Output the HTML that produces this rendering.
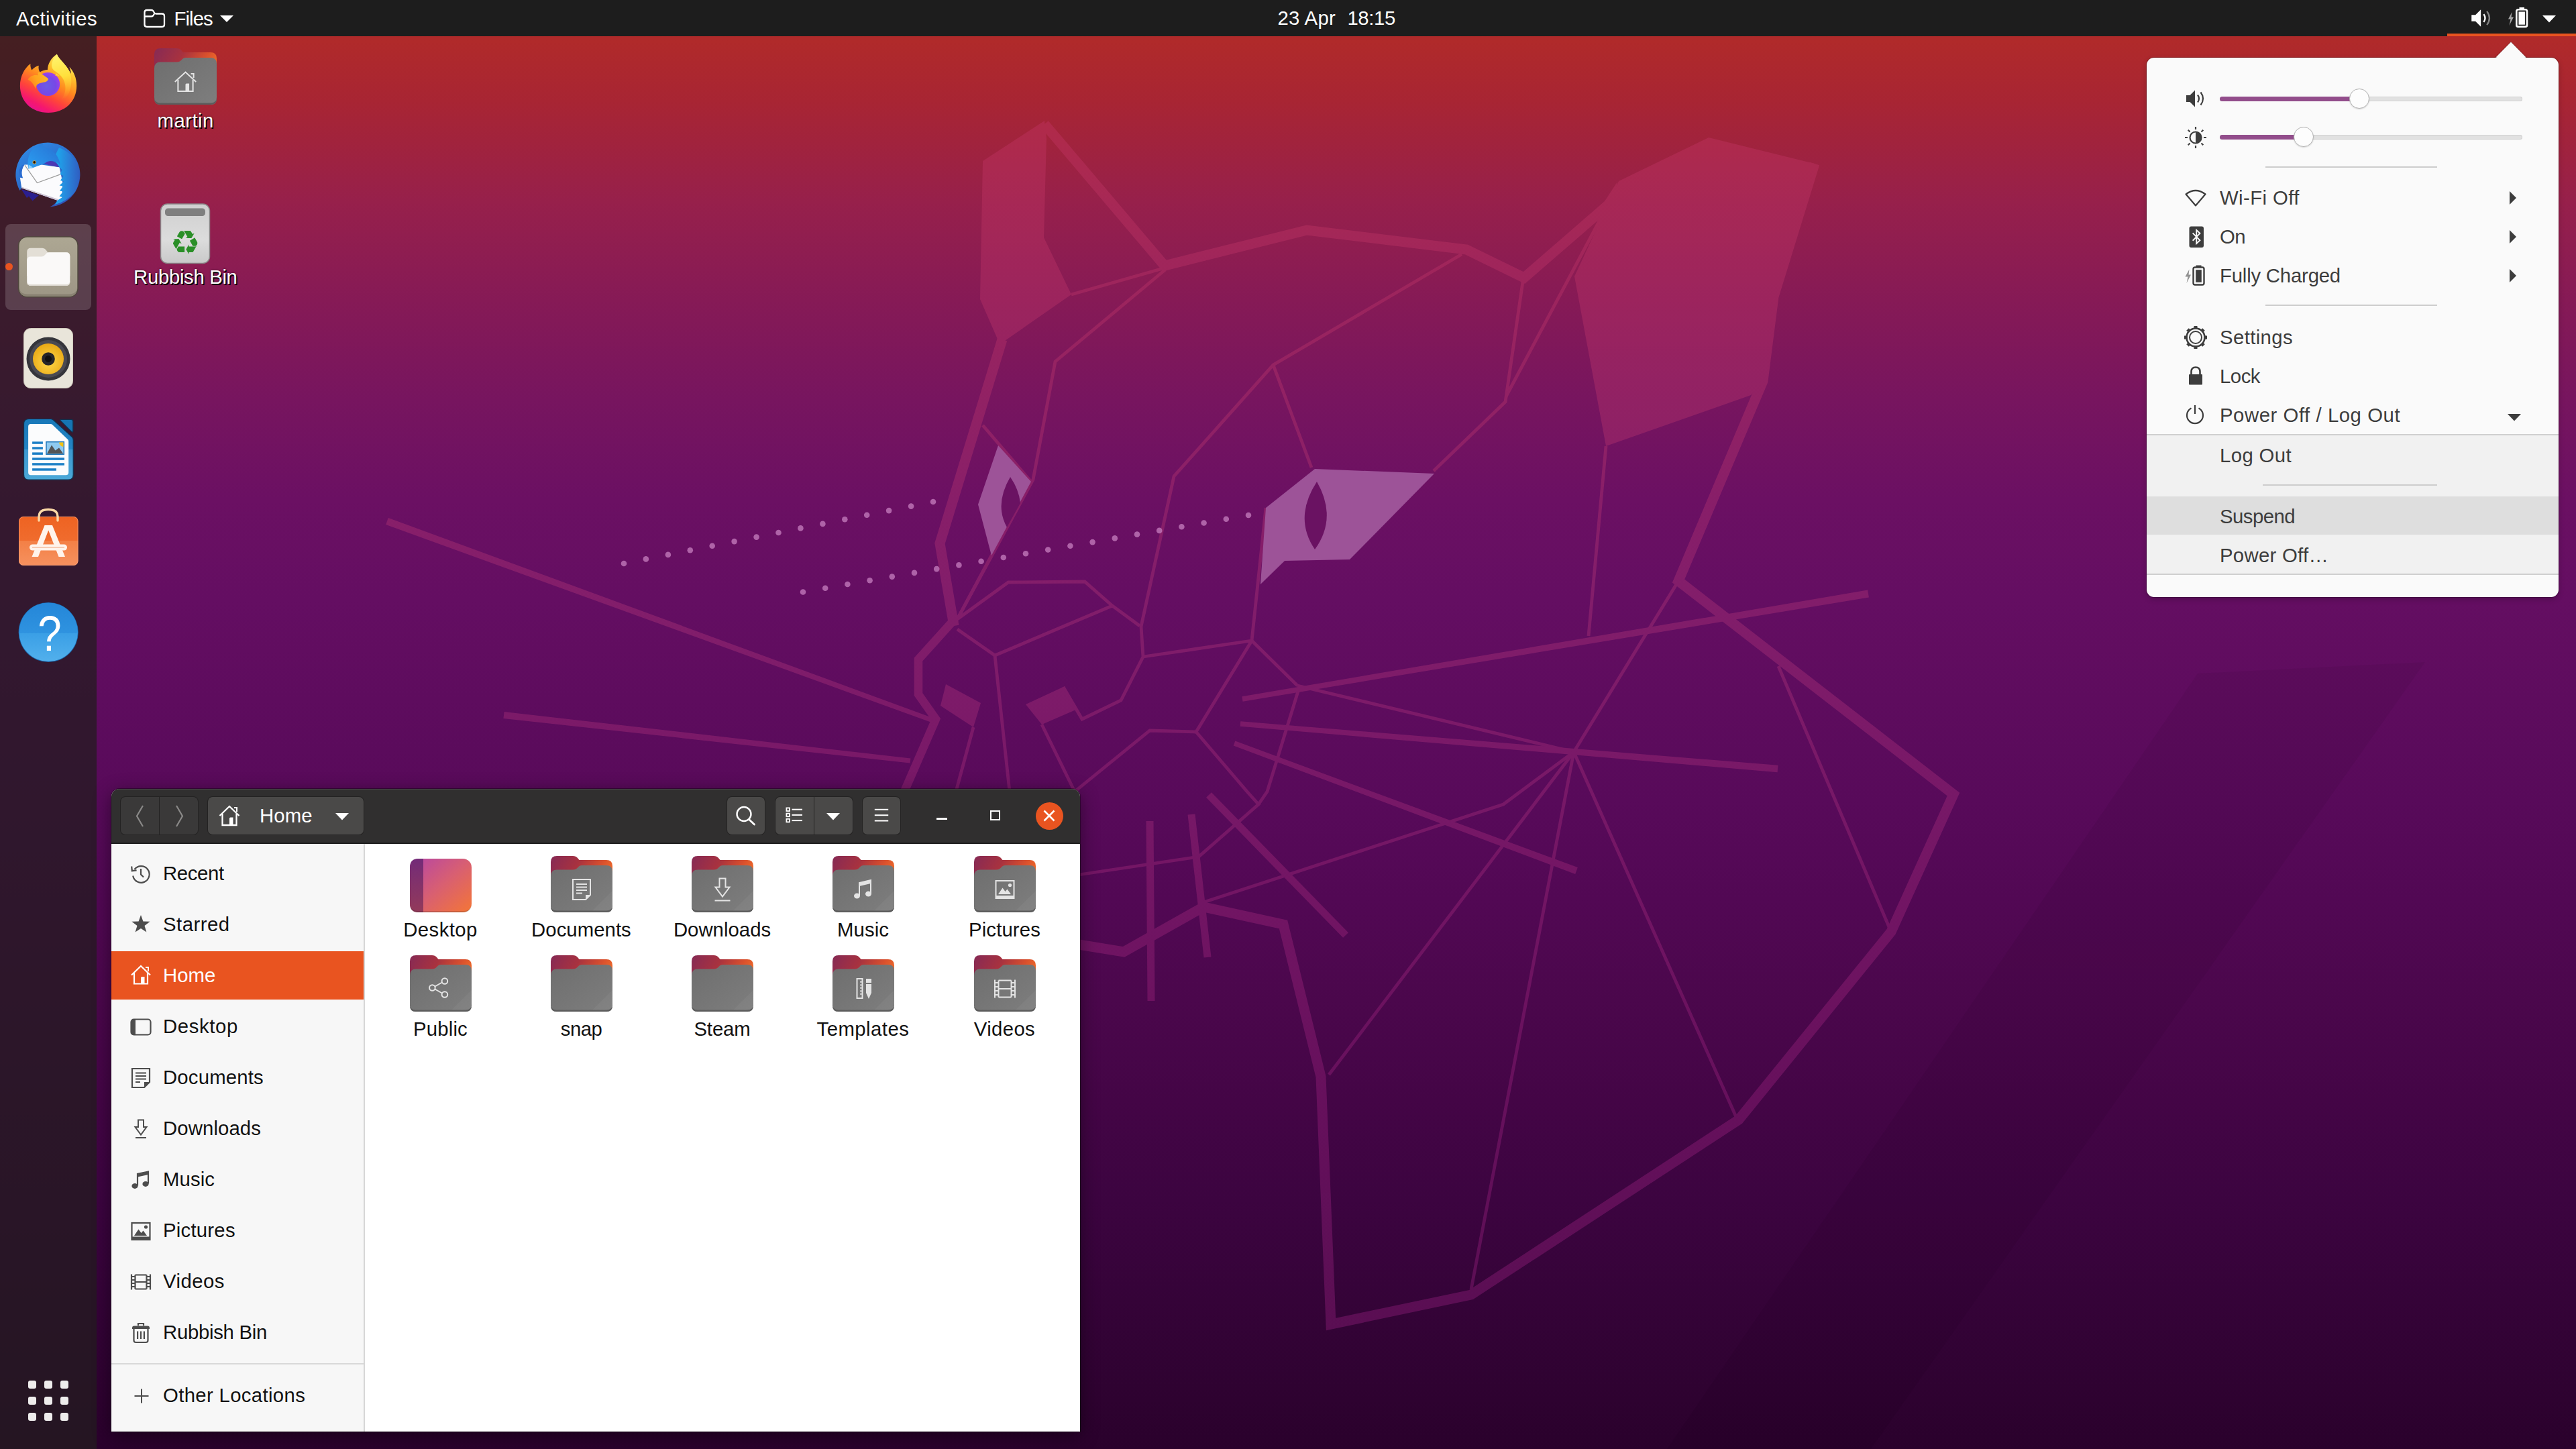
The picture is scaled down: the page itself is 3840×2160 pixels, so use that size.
<!DOCTYPE html>
<html lang="en">
<head>
<meta charset="utf-8">
<title>Ubuntu Desktop</title>
<style>
html,body{margin:0;padding:0;}
body{width:3840px;height:2160px;overflow:hidden;position:relative;
 font-family:"Liberation Sans","DejaVu Sans",sans-serif;font-size:29px;color:#fff;
 background:linear-gradient(180deg,#b22b29 0px,#b02a2a 60px,#a82533 150px,#97204b 300px,#861a56 447px,#77155f 596px,#6b1063 745px,#640e62 894px,#5e0c5e 1043px,#580a5a 1192px,#520854 1341px,#4b074c 1490px,#440546 1640px,#3c0440 1789px,#350338 1938px,#2e0230 2087px,#2a012c 2160px);}
.abs{position:absolute;}
#topbar{position:absolute;left:0;top:0;width:3840px;height:53.5px;background:#1d1d1d;}
#topbar .t{position:absolute;top:0;height:54px;line-height:54px;font-size:29.5px;color:#fff;white-space:nowrap;}
#dock{position:absolute;left:0;top:53.5px;width:144px;height:2106.5px;background:rgba(36,28,32,0.76);}
</style>
</head>
<body>
<svg id="wall" width="3840" height="2160" viewBox="0 0 3840 2160" style="position:absolute;left:0;top:0">
<polygon points="3276,1004 3615,987 2789,2160 2485,2160" fill="#000" opacity="0.05"/>
<defs><linearGradient id="lg" gradientUnits="userSpaceOnUse" x1="0" y1="180" x2="0" y2="1980"><stop offset="0" stop-color="#c0335f"/><stop offset="0.43" stop-color="#a63077"/><stop offset="0.75" stop-color="#932078"/><stop offset="1" stop-color="#8a1c76"/></linearGradient></defs>
<g opacity="0.45">
<polygon points="1465,240 1557,180 1560,206 1556,354 1597,439 1495,510 1489,510 1461,446" fill="url(#lg)"/>
<polygon points="2392,300 2411,271 2404,306" fill="url(#lg)"/>
<polygon points="2547,205 2705,244 2644,442 2628,568 2610,589 2394,665 2347,412 2396,307 2413,270" fill="url(#lg)"/>
<g fill="none" stroke="url(#lg)" stroke-linejoin="miter" stroke-linecap="butt">
<g stroke-width="15">
<polyline points="1557,185 1736,396 1948,343 2186,372 2272,414 2400,303"/>
<polyline points="2705,244 2644,442 2628,568 2502,866 2912,1184 2819,1389 2592,1669 2193,1930 1984,1974 1969,1605 1913,1378 1794,1352 1675,1419 1608,1408"/>
</g><g stroke-width="15">
<polyline points="1494,506 1401,810 1422,933"/>
</g><g stroke-width="11">
<polyline stroke-width="12.5" points="1424,922 1369,983 1369,1035 1395,1072 1348,1180"/>
<polyline points="1714,1224 1716,1492"/>
<polyline points="1776,1214 1800,1427"/>
<polyline points="1802,1185 2006,1394"/>
<polygon points="1400.2,1073.7 578.8,772.1 575.2,781.9 1397.8,1080.3" fill="url(#lg)" stroke="none"/>
<polygon points="1357.4,1130.5 751.6,1061.0 750.4,1071.0 1356.6,1137.5" fill="url(#lg)" stroke="none"/>
<polygon points="1852.6,1045.7 2785.9,890.4 2784.1,879.6 1851.4,1038.3" fill="url(#lg)" stroke="none"/>
<polygon points="1848.7,1082.7 2649.6,1151.2 2650.4,1140.8 1849.3,1075.3" fill="url(#lg)" stroke="none"/>
<polygon points="1838.7,1111.5 2348.2,1302.9 2351.8,1293.1 1841.3,1104.5" fill="url(#lg)" stroke="none"/>
</g><g stroke-width="4.8">
<polyline points="1597,439 1734,400"/>
<polyline points="1737,402 1573,539 1540,715 1427,923"/>
<polyline points="2179,379 1898,544 1750,710 1701,934 1704,979 1671,1044 1613,1072 1585,1024"/>
<polyline points="1898,544 1955,697"/>
<polyline points="2270,420 2244,599 2137,702"/>
<polyline points="2396,307 2245,591"/>
<polyline points="1465,634 1537,718"/>
<polyline points="1537,718 1427,923 1503,868 1617,867 1658,903 1699,933"/>
<polyline points="1427,938 1483,977 1658,903"/>
<polyline points="1483,977 1505,1180"/>
<polyline points="1553,1080 1602,1180"/>
<polyline points="1451,1084 1425,1180"/>
<polyline points="1704,979 1866,955 1887,757"/>
<polyline points="1866,955 1934,1022"/>
<polyline points="1866,955 1783,1091 1714,1089 1602,1180"/>
<polyline points="1783,1091 1859,1180 1876,1199 1787,1277 1608,1304"/>
<polyline points="1937,1024 1889,1180 1876,1199"/>
<polyline points="2394,665 2368,948"/>
<polyline points="2502,866 2346,1121"/>
<polyline points="2346,1121 1981,1602"/>
<polyline points="2346,1121 2193,1922"/>
<polyline points="2346,1121 2588,1665"/>
<polyline points="2346,1121 2241,1199 1794,1345"/>
<polyline points="2651,993 2819,1389"/>
<polyline points="1934,1022 2346,1121"/>
</g></g>
<polygon points="1410,1020 1462,1048 1451,1084 1402,1052" fill="url(#lg)"/>
<polygon points="1529,1050 1585,1024 1606,1057 1553,1080" fill="url(#lg)"/>
</g>
<polygon points="1488,664 1537,718 1478,828 1458,752" fill="#9d5398"/>
<polygon points="1960,699 2138,706 2012,834 1915,836 1879,871 1887,757" fill="#9d5398"/>
<path d="M1506,711 Q1482,752 1501,786 L1521,750 Q1519,730 1506,711Z" fill="#6a1262"/>
<path d="M1963,718 Q1928,772 1960,819 Q1994,772 1963,718Z" fill="#6a1262"/>
<g fill="#c77fc0" opacity="0.75"><circle cx="930.0" cy="840.0" r="4.3"/><circle cx="962.9" cy="833.4" r="4.3"/><circle cx="995.9" cy="826.9" r="4.3"/><circle cx="1028.8" cy="820.3" r="4.3"/><circle cx="1061.7" cy="813.7" r="4.3"/><circle cx="1094.6" cy="807.1" r="4.3"/><circle cx="1127.6" cy="800.6" r="4.3"/><circle cx="1160.5" cy="794.0" r="4.3"/><circle cx="1193.4" cy="787.4" r="4.3"/><circle cx="1226.4" cy="780.9" r="4.3"/><circle cx="1259.3" cy="774.3" r="4.3"/><circle cx="1292.2" cy="767.7" r="4.3"/><circle cx="1325.1" cy="761.1" r="4.3"/><circle cx="1358.1" cy="754.6" r="4.3"/><circle cx="1391.0" cy="748.0" r="4.3"/><circle cx="1197.0" cy="882.5" r="4.3"/><circle cx="1230.2" cy="876.8" r="4.3"/><circle cx="1263.4" cy="871.0" r="4.3"/><circle cx="1296.6" cy="865.3" r="4.3"/><circle cx="1329.8" cy="859.6" r="4.3"/><circle cx="1363.0" cy="853.9" r="4.3"/><circle cx="1396.2" cy="848.1" r="4.3"/><circle cx="1429.4" cy="842.4" r="4.3"/><circle cx="1462.6" cy="836.7" r="4.3"/><circle cx="1495.8" cy="831.0" r="4.3"/><circle cx="1529.0" cy="825.2" r="4.3"/><circle cx="1562.2" cy="819.5" r="4.3"/><circle cx="1595.4" cy="813.8" r="4.3"/><circle cx="1628.6" cy="808.1" r="4.3"/><circle cx="1661.8" cy="802.4" r="4.3"/><circle cx="1695.0" cy="796.6" r="4.3"/><circle cx="1728.2" cy="790.9" r="4.3"/><circle cx="1761.4" cy="785.2" r="4.3"/><circle cx="1794.6" cy="779.5" r="4.3"/><circle cx="1827.8" cy="773.7" r="4.3"/><circle cx="1861.0" cy="768.0" r="4.3"/></g>
</svg>
<div id="topbar"></div>
<div class="abs" style="left:24.1px;top:12.7px;font-size:29.33px;line-height:1;white-space:nowrap;letter-spacing:0.54px;color:#fff;">Activities</div>
<svg class="abs" style="left:212px;top:11px" width="38" height="32" viewBox="0 0 38 32"><path d="M3.500 7.500 Q3.500 4 7 4 L13.500 4 Q15.500 4 16.500 5.500 L18 8 Q18.800 9.500 20.500 9.500 L29.500 9.500 Q33 9.500 33 13 L33 25.500 Q33 29 29.500 29 L7 29 Q3.500 29 3.500 25.500 Z M3.500 13.500 L13.500 13.500 Q15.500 13.500 16.500 12 L18 9.500" fill="none" stroke="#fff" stroke-width="2.300" stroke-linejoin="round"/></svg>
<div class="abs" style="left:259.6px;top:12.7px;font-size:29.33px;line-height:1;white-space:nowrap;letter-spacing:-0.95px;color:#fff;">Files</div>
<svg class="abs" style="left:328px;top:23px" width="20" height="10" viewBox="0 0 20 10"><path d="M0 0 L20 0 L10 10Z" fill="#fff"/></svg>
<div class="abs" style="left:1904.4px;top:12.2px;font-size:29.33px;line-height:1;white-space:nowrap;letter-spacing:0.34px;color:#fff;">23 Apr</div>
<div class="abs" style="left:2008.4px;top:12.2px;font-size:29.33px;line-height:1;white-space:nowrap;letter-spacing:-0.36px;color:#fff;">18:15</div>
<div class="abs" style="left:3648px;top:49.500px;width:192px;height:4px;background:#e95420"></div>
<div id="dock"></div>
<!-- Firefox -->
<svg class="abs" style="left:16px;top:66px" width="112" height="112" viewBox="0 0 112 112">
 <defs>
  <linearGradient id="ffA" gradientUnits="userSpaceOnUse" x1="84" y1="22" x2="40" y2="102"><stop offset="0" stop-color="#fff36a"/><stop offset="0.22" stop-color="#ffc32e"/><stop offset="0.45" stop-color="#ff8a1f"/><stop offset="0.68" stop-color="#ff4639"/><stop offset="0.88" stop-color="#f5176f"/><stop offset="1" stop-color="#e8118f"/></linearGradient>
  <radialGradient id="ffB" gradientUnits="userSpaceOnUse" cx="54" cy="62" r="24"><stop offset="0" stop-color="#6b5ce6"/><stop offset="0.55" stop-color="#7748e6"/><stop offset="1" stop-color="#b53cf0"/></radialGradient>
  <linearGradient id="ffC" gradientUnits="userSpaceOnUse" x1="60" y1="44" x2="26" y2="62"><stop offset="0" stop-color="#ffc12a"/><stop offset="0.6" stop-color="#ffa51f"/><stop offset="1" stop-color="#ff7a1c"/></linearGradient>
  <linearGradient id="ffD" gradientUnits="userSpaceOnUse" x1="70" y1="16" x2="86" y2="80"><stop offset="0" stop-color="#fff46e"/><stop offset="0.5" stop-color="#ffe03c"/><stop offset="1" stop-color="#ffb52a" stop-opacity="0"/></linearGradient>
 </defs>
 <path d="M68.800 14.700 C72 22 79 27 85 36 L90 44 C89.500 40 88.500 36.500 87.300 33.600 C94 41 98.200 50 98.200 62 C98.200 85 81 102 56 102 C31 102 13.900 85 13.900 62 C13.900 48 20 36 29.400 29 C29 33 30 36 31.400 38.600 C34 35 38 33 41.700 31.700 C41 36 42 39 43.400 41.600 C47 39 51 38 54.900 37.900 C55 30 60 20 68.800 14.700Z" fill="url(#ffA)"/>
 <path d="M68.800 14.700 C72 22 79 27 85 36 C92 47 92 62 86 74 C82 82 76 86 70 88 C80 80 84 68 80 56 C77 47 70 43 66 40 C60 36 58 28 68.800 14.700Z" fill="url(#ffD)"/>
 <circle cx="55.600" cy="59.500" r="17.600" fill="url(#ffB)"/>
 <path d="M25.500 52.500 C29 47 35 45 41 46.500 C40 43 40.500 41 43.400 41.600 C46 45 51 47 56 51.400 C55.500 54 54 55.500 51.500 56.200 C47.500 57 43.500 57.500 40.200 59.500 C38 61.500 37.200 63.500 37.500 66.500 C35 62 33 58 30 55.500 C28.500 54.500 27 53.500 25.500 52.500Z" fill="url(#ffC)"/>
 <path d="M65.700 46.800 C68.500 46 71 46.500 72.600 47.500 C71 45.500 69 44 66.500 43 C68 44.500 67.500 46 65.700 46.800Z" fill="#ffd43a"/>
</svg>
<!-- Thunderbird -->
<svg class="abs" style="left:16px;top:206px" width="112" height="112" viewBox="0 0 112 112">
 <defs>
  <linearGradient id="tbA" gradientUnits="userSpaceOnUse" x1="30" y1="12" x2="86" y2="100"><stop offset="0" stop-color="#2f86e2"/><stop offset="0.5" stop-color="#2a68c8"/><stop offset="1" stop-color="#3450b4"/></linearGradient>
  <linearGradient id="tbB" gradientUnits="userSpaceOnUse" x1="72" y1="60" x2="104" y2="60"><stop offset="0" stop-color="#1f9fe8"/><stop offset="0.45" stop-color="#2a80d8"/><stop offset="1" stop-color="#2f5cc0"/></linearGradient>
  <linearGradient id="tbC" gradientUnits="userSpaceOnUse" x1="28" y1="44" x2="60" y2="10"><stop offset="0" stop-color="#2a9cf0"/><stop offset="1" stop-color="#2878d8"/></linearGradient>
 </defs>
 <path d="M58 102.500 A48 48 0 1 0 13.500 78 L16.200 74.200 L69.600 92.700 Q66 99 58 102.500Z" fill="url(#tbA)"/>
 <path d="M15.500 75.700 L42 85 L32.500 93.500 L27 86.500 L24 89Z" fill="#2b1f8f"/>
 <path d="M20.500 39.500 L45.600 39.400 L72.600 43.300 L77.300 65.700 L76.500 91.200 L69.600 92.700 L16.200 74.200 L13.900 58.700 L17.800 43.300Z" fill="#fbfbfd"/>
 <path d="M16.200 74.200 L69.600 92.700 L71 91 L16 72.500Z" fill="#cfc6d6"/>
 <path d="M20.900 40.200 L39.400 66.500 L73.400 54.100" fill="none" stroke="#9c9c9c" stroke-width="1.300"/>
 <path d="M20.500 39.500 C16 46 15.500 53 18.200 59.500 L13.900 58.700 L12 48 L17 40Z" fill="#2a6cd0"/>
 <path d="M50 37.500 C58 31 68 34 72.600 43.300 L58 40.500Z" fill="#4c38b4"/>
 <path d="M72.600 43.300 L76.500 47 L73.500 54 L78.500 56 L74 63 L79 64.500 L72.500 70.500 L78 71.500 L73 78.500 L78 79.500 L72.500 86.500 L77 88 L69.600 92.700 L66 99 Q84 94 96 80 Q106 62 100 40 Q92 22 72 14 L64 30Z" fill="url(#tbB)"/>
 <path d="M30 20 C36 12 42 9.500 49.500 8 C47 10.500 47.500 12.500 50.500 13.500 C62 15 72 26 74 40 C68 33 58 32 52 36.500 L45 39.700 L32 44.500 L26.300 45.600 C24.500 38 25.500 27 30 20Z" fill="url(#tbC)"/>
 <path d="M26.300 45.600 L26.800 39.500 L33 43.500Z" fill="#8fd2fa"/>
 <circle cx="35.200" cy="35.900" r="2.700" fill="#d8a33c"/><circle cx="35.200" cy="35.900" r="1.800" fill="#1a1208"/>
</svg>
<!-- Files (active) -->
<div class="abs" style="left:8px;top:334px;width:128px;height:128px;border-radius:8px;background:rgba(255,255,255,0.16)"></div>
<div class="abs" style="left:8px;top:392px;width:11px;height:11px;border-radius:6px;background:#e95420"></div>
<svg class="abs" style="left:25px;top:351px" width="94" height="94" viewBox="0 0 94 94">
 <defs><linearGradient id="fiA" x1="0" y1="0" x2="0" y2="1"><stop offset="0" stop-color="#ada793"/><stop offset="1" stop-color="#9d9685"/></linearGradient></defs>
 <rect x="2.600" y="2" width="88.500" height="89.800" rx="13" fill="url(#fiA)" stroke="#4f473d" stroke-width="1.600"/>
 <path d="M4 80 Q4 90.500 16 90.500 L78 90.500 Q89.500 90.500 89.500 80 L89.500 77 Q89.500 87.500 78 87.500 L16 87.500 Q4 87.500 4 77Z" fill="#8a8373"/>
 <path d="M15.200 24.500 Q15.200 18.800 21 18.800 L38 18.800 Q41.500 18.800 43.500 21.500 L46.300 25.300 L73.500 25.300 Q79.300 25.300 79.300 31 L79.300 60 L15.200 60Z" fill="#e3dfd6"/>
 <path d="M15.200 37 Q15.200 31.400 21 31.400 L37 31.400 Q40.500 31.400 42.500 28.500 L43.500 27.200 Q45 25.300 48 25.300 L73.500 25.300 Q79.300 25.300 79.300 31 L79.300 69.300 Q79.300 75 73.500 75 L21 75 Q15.200 75 15.200 69.300Z" fill="#faf9f8"/>
 <path d="M15.200 67 L15.200 69.300 Q15.200 75 21 75 L73.500 75 Q79.300 75 79.300 69.300 L79.300 67 Q79.300 73 73.500 73 L21 73 Q15.200 73 15.200 67Z" fill="#dedad2"/>
</svg>
<!-- Rhythmbox -->
<svg class="abs" style="left:33px;top:487px" width="78" height="94" viewBox="0 0 78 94">
 <defs><radialGradient id="rbA" cx="0.5" cy="0.6" r="0.6"><stop offset="0" stop-color="#ffd84a"/><stop offset="1" stop-color="#e8a814"/></radialGradient></defs>
 <rect x="2.5" y="2.5" width="73" height="89" rx="10" fill="#e9e5da" stroke="#cfcabc" stroke-width="1"/>
 <circle cx="39" cy="48" r="32.5" fill="#35353b"/>
 <circle cx="39" cy="48" r="28" fill="#4a4a52"/>
 <circle cx="39" cy="48" r="23" fill="url(#rbA)"/>
 <circle cx="39" cy="48" r="9.8" fill="#26262a"/>
 <circle cx="39" cy="48" r="5" fill="#111"/>
</svg>
<!-- LibreOffice Writer -->
<svg class="abs" style="left:16px;top:610px" width="112" height="120" viewBox="0 0 112 120">
 <defs><linearGradient id="loA" x1="0" y1="0" x2="0" y2="1"><stop offset="0" stop-color="#1878b8"/><stop offset="0.5" stop-color="#2484c4"/><stop offset="0.5" stop-color="#3c98d0"/><stop offset="1" stop-color="#4ba8d8"/></linearGradient></defs>
 <path d="M27 14.500 L59.500 14.500 Q62 14.500 64 16.500 L91.500 41.500 Q93.200 43.200 93.200 46 L93.200 97.500 Q93.200 105.200 85.500 105.200 L27 105.200 Q19.500 105.200 19.500 97.500 L19.500 22 Q19.500 14.500 27 14.500Z" fill="url(#loA)" stroke="#0e3350" stroke-width="1.200"/>
 <path d="M30 22 L59.500 22 Q61 22 62 23 L85 45 Q86.200 46.200 86.200 48 L86.200 94.200 Q86.200 98.200 82.200 98.200 L30 98.200 Q26.100 98.200 26.100 94.200 L26.100 26 Q26.100 22 30 22Z" fill="#fbfcfd"/>
 <path d="M75.500 15.300 L90 15.300 Q92.800 15.300 92.800 18 L92.800 32.500 Q92.800 35.500 90.500 33.300 L74.500 17.300 Q72.500 15.300 75.500 15.300Z" fill="#1674b2" stroke="#0e3350" stroke-width="1.200"/>
 <g fill="#1c7fc6"><rect x="32.100" y="48.300" width="15.800" height="3.500"/><rect x="32.100" y="56.300" width="15.800" height="3.500"/><rect x="32.100" y="64.400" width="15.800" height="3.500"/><rect x="32.100" y="72.300" width="47.900" height="3.500"/><rect x="32.100" y="80.200" width="47.900" height="3.500"/><rect x="32.100" y="88.200" width="35.800" height="3.500"/></g>
 <rect x="52.900" y="48.700" width="26.400" height="18.500" fill="#8fcaf0" stroke="#1c74b8" stroke-width="1.500"/>
 <path d="M54 66.300 L61 53.500 L66.500 61.500 L72 57.500 L78.300 66.300Z" fill="#555555"/>
 <path d="M72 49.600 L78.400 49.600 L78.400 56 Q73 55.500 72 49.600Z" fill="#f5c211"/>
</svg>
<!-- Ubuntu Software -->
<svg class="abs" style="left:24px;top:754px" width="96" height="92" viewBox="0 0 96 92">
 <defs><linearGradient id="usA" x1="0" y1="0" x2="0" y2="1"><stop offset="0" stop-color="#ee6322"/><stop offset="0.5" stop-color="#f06c2e"/><stop offset="0.5" stop-color="#f38046"/><stop offset="1" stop-color="#f6915f"/></linearGradient></defs>
 <rect x="4" y="16" width="88.500" height="73" rx="7" fill="url(#usA)"/>
 <rect x="4.500" y="16.500" width="87.500" height="72" rx="6.500" fill="none" stroke="#f9a27a" stroke-width="1" opacity="0.700"/>
 <path d="M34 22 L34 16 Q34 5.500 48 5.500 Q62 5.500 62 16 L62 22" fill="none" stroke="#fbd9a6" stroke-width="3.400" stroke-linecap="round"/>
 <path d="M42.500 29 L54 29 L73 76 L63.500 76 L48.200 36.500 L33 76 L23.500 76Z" fill="#fff4ec"/>
 <rect x="20" y="57.500" width="56" height="9" rx="4.500" fill="#fff4ec"/>
 <rect x="24" y="61.200" width="48" height="1.800" fill="#f6c9b0"/>
</svg>
<!-- Help -->
<svg class="abs" style="left:25px;top:895px" width="94" height="94" viewBox="0 0 94 94">
 <defs><linearGradient id="hpA" x1="0" y1="0" x2="0" y2="1"><stop offset="0" stop-color="#2486d8"/><stop offset="0.52" stop-color="#2f93e0"/><stop offset="0.52" stop-color="#3a9fe6"/><stop offset="1" stop-color="#52b0ec"/></linearGradient></defs>
 <circle cx="47.200" cy="47.500" r="44.600" fill="#1a62a6"/>
 <circle cx="47.200" cy="47.200" r="43.800" fill="url(#hpA)"/>
 <text x="0" y="0" transform="translate(49 75) scale(0.850 1)" text-anchor="middle" font-family="Liberation Sans, sans-serif" font-size="75" fill="#fff">?</text>
</svg>
<!-- Show apps -->
<svg class="abs" style="left:41px;top:2057px" width="62" height="62" viewBox="0 0 62 62">
 <g fill="#eeecec"><rect x="1" y="1" width="12" height="12" rx="3"/><rect x="25" y="1" width="12" height="12" rx="3"/><rect x="49" y="1" width="12" height="12" rx="3"/><rect x="1" y="25" width="12" height="12" rx="3"/><rect x="25" y="25" width="12" height="12" rx="3"/><rect x="49" y="25" width="12" height="12" rx="3"/><rect x="1" y="49" width="12" height="12" rx="3"/><rect x="25" y="49" width="12" height="12" rx="3"/><rect x="49" y="49" width="12" height="12" rx="3"/></g>
</svg>
<svg class="abs" style="left:230px;top:71.800px" width="93" height="88" viewBox="0 0 92 88" preserveAspectRatio="none"><defs><linearGradient id="fbh" x1="0" y1="0" x2="1" y2="0.350"><stop offset="0" stop-color="#862a55"/><stop offset="0.450" stop-color="#a8323f"/><stop offset="0.800" stop-color="#d9502d"/><stop offset="1" stop-color="#ee6a2a"/></linearGradient><linearGradient id="ffh" x1="0" y1="0" x2="1" y2="1"><stop offset="0" stop-color="#6e6e6e"/><stop offset="1" stop-color="#7e7e7e"/></linearGradient></defs><path d="M0 9 Q0 0 9 0 L33 0 Q37.500 0 40 3 L42.500 6 L83 6 Q92 6 92 15 L92 60 L0 60Z" fill="url(#fbh)"/><path d="M0 30 Q0 20.500 9 20.500 L33 20.500 Q37.500 20.500 40 17.500 L42 15.500 Q43.500 14 46 14 L83 14 Q92 14 92 23 L92 75 Q92 84 83 84 L9 84 Q0 84 0 75Z" fill="url(#ffh)"/><path d="M0 73 L0 75 Q0 84 9 84 L83 84 Q92 84 92 75 L92 73 Q92 81.500 83 81.500 L9 81.500 Q0 81.500 0 73Z" fill="#5c5c5c"/><path d="M30.500 50 L46 35.500 L61.500 50" fill="none" stroke="#e4e4e4" stroke-width="2"/><path d="M35 47 L35 64 L57 64 L57 47" fill="none" stroke="#e4e4e4" stroke-width="2"/><path d="M46 64 L46 54 Q46 52.500 47.500 52.500 L51.500 52.500 L51.500 64Z" fill="#e4e4e4"/><path d="M54 38 L58 38 L58 44" fill="none" stroke="#e4e4e4" stroke-width="2"/></svg>
<div class="abs" style="left:234.5px;top:164.9px;font-size:29.33px;line-height:1;white-space:nowrap;letter-spacing:0.49px;color:#fff;text-shadow:1.500px 1.500px 0 #000,0 0 3px rgba(0,0,0,0.6);">martin</div>
<svg class="abs" style="left:237px;top:302px" width="78" height="93" viewBox="0 0 78 93"><defs><linearGradient id="rbn" x1="0" y1="0" x2="0" y2="1"><stop offset="0" stop-color="#cfcfcf"/><stop offset="0.600" stop-color="#dcdcdc"/><stop offset="1" stop-color="#c9c9c9"/></linearGradient></defs><rect x="2.500" y="2" width="73" height="88.500" rx="10" fill="url(#rbn)" stroke="#8a8486" stroke-width="1.500"/><rect x="9" y="8.500" width="60" height="11.500" rx="4.500" fill="#7f7f7f"/><text x="39.200" y="76.500" text-anchor="middle" font-family="DejaVu Sans, sans-serif" font-size="50" fill="#2a8f27">♻</text></svg>
<div class="abs" style="left:199.1px;top:397.7px;font-size:29.33px;line-height:1;white-space:nowrap;letter-spacing:-0.33px;color:#fff;text-shadow:1.500px 1.500px 0 #000,0 0 3px rgba(0,0,0,0.6);">Rubbish Bin</div>
<div id="win" class="abs" style="left:166px;top:1176px;width:1444px;height:958px;border-radius:12px 12px 0 0;background:#fff;box-shadow:0 0 0 1px rgba(0,0,0,0.35),0 6px 28px rgba(0,0,0,0.45);overflow:hidden">
<div class="abs" style="left:0;top:0;width:1444px;height:82px;background:#302f2f;box-shadow:inset 0 1px 0 #454444"></div>
<div class="abs" style="left:0;top:80px;width:1444px;height:2px;background:#1e1e1e"></div>
<div class="abs" style="left:0;top:82px;width:376px;height:876px;background:#f7f7f7"></div>
<div class="abs" style="left:376px;top:82px;width:2px;height:876px;background:#d6d6d6"></div>
<div class="abs" style="left:0;top:242px;width:376px;height:72px;background:#e95420"></div>
<div class="abs" style="left:0;top:856px;width:376px;height:2px;background:#d9d9d9"></div>
</div>
<div class="abs" style="left:180px;top:1188px;width:57px;height:56px;border-radius:7px 0 0 7px;background:#3a3939;box-shadow:0 0 0 1px #242323"></div>
<div class="abs" style="left:238px;top:1188px;width:57px;height:56px;border-radius:0 7px 7px 0;background:#3a3939;box-shadow:0 0 0 1px #242323"></div>
<div class="abs" style="left:310px;top:1188px;width:232px;height:56px;border-radius:7px;background:#4a4948;box-shadow:0 0 0 1px #242323"></div>
<div class="abs" style="left:1084px;top:1188px;width:56px;height:56px;border-radius:7px;background:#4a4948;box-shadow:0 0 0 1px #242323"></div>
<div class="abs" style="left:1156px;top:1188px;width:57px;height:56px;border-radius:7px 0 0 7px;background:#4a4948;box-shadow:0 0 0 1px #242323"></div>
<div class="abs" style="left:1214px;top:1188px;width:57px;height:56px;border-radius:0 7px 7px 0;background:#4a4948;box-shadow:0 0 0 1px #242323"></div>
<div class="abs" style="left:1286px;top:1188px;width:56px;height:56px;border-radius:7px;background:#4a4948;box-shadow:0 0 0 1px #242323"></div>
<svg class="abs" style="left:180px;top:1188px" width="115" height="57" viewBox="0 0 115 57"><path d="M33 13 L24 28.5 L33 44" fill="none" stroke="#8a8988" stroke-width="2.2"/><path d="M83 13 L92 28.5 L83 44" fill="none" stroke="#8a8988" stroke-width="2.2"/></svg>
<svg class="abs" style="left:325px;top:1199px" width="34" height="34" viewBox="0 0 34 34"><path d="M2.5 17 L17 3 L31.5 17" fill="none" stroke="#fff" stroke-width="2.3" stroke-linejoin="miter"/><path d="M6.5 14 L6.5 31 L27.5 31 L27.5 14" fill="none" stroke="#fff" stroke-width="2.3"/><path d="M17 31 L17 21 Q17 19.5 18.5 19.5 L22.5 19.5 L22.5 31Z" fill="#fff"/><path d="M24 5 L28 5 L28 11" fill="none" stroke="#fff" stroke-width="2"/></svg>
<div class="abs" style="left:387.0px;top:1200.7px;font-size:29.33px;line-height:1;white-space:nowrap;letter-spacing:0.14px;color:#fff;">Home</div>
<svg class="abs" style="left:500px;top:1212px" width="20" height="11" viewBox="0 0 20 11"><path d="M0 0 L20 0 L10 10.5Z" fill="#fff"/></svg>
<svg class="abs" style="left:1094px;top:1198px" width="36" height="36" viewBox="0 0 36 36"><circle cx="15" cy="15.5" r="10.5" fill="none" stroke="#fff" stroke-width="2.4"/><path d="M22.5 23.5 L30.5 31" stroke="#fff" stroke-width="2.8" stroke-linecap="round"/></svg>
<svg class="abs" style="left:1170px;top:1202px" width="28" height="28" viewBox="0 0 28 28"><g fill="none" stroke="#fff" stroke-width="1.8"><rect x="2.4" y="2.4" width="4.6" height="4.6"/><rect x="2.4" y="10.6" width="4.6" height="4.6"/><rect x="2.4" y="18.8" width="4.6" height="4.6"/></g><g fill="#fff"><rect x="10.5" y="3.7" width="15.5" height="2"/><rect x="10.5" y="11.9" width="15.5" height="2"/><rect x="10.5" y="20.1" width="15.5" height="2"/></g></svg>
<svg class="abs" style="left:1232px;top:1212px" width="20" height="11" viewBox="0 0 20 11"><path d="M0 0 L20 0 L10 10.5Z" fill="#fff"/></svg>
<svg class="abs" style="left:1303px;top:1204px" width="22" height="22" viewBox="0 0 22 22"><g fill="#fff"><rect x="0.8" y="1.8" width="20.4" height="2"/><rect x="0.8" y="10.2" width="20.4" height="2"/><rect x="0.8" y="18.5" width="20.4" height="2"/></g></svg>
<div class="abs" style="left:1396px;top:1219px;width:16px;height:3px;background:#fff"></div>
<div class="abs" style="left:1475.500px;top:1207.700px;width:11.200px;height:11.200px;border:2.500px solid #fff"></div>
<div class="abs" style="left:1543.5px;top:1195.5px;width:41px;height:41px;border-radius:21px;background:#e95420"></div>
<svg class="abs" style="left:1552px;top:1204px" width="24" height="24" viewBox="0 0 24 24"><path d="M4.5 4.5 L19.5 19.5 M19.5 4.5 L4.5 19.5" stroke="#fff" stroke-width="2.6"/></svg>
<svg class="abs" style="left:193.5px;top:1286.5px" width="32" height="32" viewBox="0 0 32 32"><path d="M6.5 9 A12.3 12.3 0 1 1 4.2 18.5" fill="none" stroke="#4d4d4d" stroke-width="2.2"/><path d="M2.2 4.5 L2.8 11.2 L9.6 10.4" fill="none" stroke="#4d4d4d" stroke-width="2.2"/><path d="M16 8 L16 16.5 L20 20.5" fill="none" stroke="#4d4d4d" stroke-width="2.2"/></svg>
<div class="abs" style="left:243.0px;top:1286.5px;font-size:29.33px;line-height:1;white-space:nowrap;letter-spacing:-0.36px;color:#111;">Recent</div>
<svg class="abs" style="left:193.5px;top:1361.0px" width="32" height="32" viewBox="0 0 32 32"><path d="M16 3 L19.4 12.4 L29.6 12.7 L21.5 18.9 L24.4 28.6 L16 22.9 L7.6 28.6 L10.5 18.9 L2.4 12.7 L12.6 12.4Z" fill="#4d4d4d"/></svg>
<div class="abs" style="left:243.0px;top:1362.5px;font-size:29.33px;line-height:1;white-space:nowrap;letter-spacing:0.48px;color:#111;">Starred</div>
<svg class="abs" style="left:193.5px;top:1436.5px" width="32" height="32" viewBox="0 0 32 32"><path d="M2 16.5 L16 3 L30 16.5" fill="none" stroke="#fff" stroke-width="2.2"/><path d="M6 13.5 L6 29.5 L26 29.5 L26 13.5" fill="none" stroke="#fff" stroke-width="2.2"/><path d="M16 29.5 L16 20.5 Q16 19 17.5 19 L21.5 19 L21.5 29.5Z" fill="#fff"/><path d="M23 5 L27 5 L27 11" fill="none" stroke="#fff" stroke-width="2"/></svg>
<div class="abs" style="left:243.0px;top:1438.5px;font-size:29.33px;line-height:1;white-space:nowrap;letter-spacing:-0.01px;color:#fff;">Home</div>
<svg class="abs" style="left:193.5px;top:1514.5px" width="32" height="32" viewBox="0 0 32 32"><rect x="1.5" y="4.5" width="29" height="23" rx="4" fill="none" stroke="#4d4d4d" stroke-width="2.2"/><path d="M5 4.5 Q1.5 4.5 1.5 8 L1.5 24 Q1.5 27.500 5 27.5 L8 27.5 L8 4.5Z" fill="#4d4d4d"/></svg>
<div class="abs" style="left:243.0px;top:1514.5px;font-size:29.33px;line-height:1;white-space:nowrap;letter-spacing:0.60px;color:#111;">Desktop</div>
<svg class="abs" style="left:193.5px;top:1590.5px" width="32" height="32" viewBox="0 0 32 32"><path d="M3 2 L29 2 L29 22 L21 30 L3 30Z" fill="none" stroke="#4d4d4d" stroke-width="2.2"/><path d="M29 22 L21 22 L21 30Z" fill="#4d4d4d"/><g fill="#4d4d4d"><rect x="8" y="7.5" width="16" height="2"/><rect x="8" y="12" width="16" height="2"/><rect x="8" y="16.5" width="16" height="2"/><rect x="8" y="21" width="7" height="2"/></g></svg>
<div class="abs" style="left:243.0px;top:1590.5px;font-size:29.33px;line-height:1;white-space:nowrap;letter-spacing:0.18px;color:#111;">Documents</div>
<svg class="abs" style="left:193.5px;top:1666.5px" width="32" height="32" viewBox="0 0 32 32"><path d="M12 2.500 L20 2.5 L20 13 L24.5 13 L16 24.5 L7.5 13 L12 13Z" fill="none" stroke="#4d4d4d" stroke-width="2"/><rect x="8" y="28" width="16" height="2" fill="#4d4d4d"/></svg>
<div class="abs" style="left:243.0px;top:1666.5px;font-size:29.33px;line-height:1;white-space:nowrap;letter-spacing:0.10px;color:#111;">Downloads</div>
<svg class="abs" style="left:193.5px;top:1742.5px" width="32" height="32" viewBox="0 0 32 32"><path d="M11 24.5 L11 7 L27 3.5 L27 21.5" fill="none" stroke="#4d4d4d" stroke-width="2.2"/><path d="M11 11.5 L27 8 L27 4 L11 7.500Z" fill="#4d4d4d"/><ellipse cx="7" cy="25" rx="4.6" ry="3.9" fill="#4d4d4d"/><ellipse cx="23" cy="22" rx="4.6" ry="3.9" fill="#4d4d4d"/></svg>
<div class="abs" style="left:243.0px;top:1742.5px;font-size:29.33px;line-height:1;white-space:nowrap;letter-spacing:0.08px;color:#111;">Music</div>
<svg class="abs" style="left:193.5px;top:1818.5px" width="32" height="32" viewBox="0 0 32 32"><rect x="2.5" y="4" width="27" height="25" fill="none" stroke="#4d4d4d" stroke-width="2.2"/><rect x="2.5" y="24.5" width="27" height="4.5" fill="#4d4d4d"/><path d="M6 23 L12.5 13.5 L16.5 19 L19.5 15.5 L25 23Z" fill="#4d4d4d"/><circle cx="23.5" cy="10" r="2.6" fill="#4d4d4d"/></svg>
<div class="abs" style="left:243.0px;top:1818.5px;font-size:29.33px;line-height:1;white-space:nowrap;letter-spacing:0.23px;color:#111;">Pictures</div>
<svg class="abs" style="left:193.5px;top:1894.5px" width="32" height="32" viewBox="0 0 32 32"><path d="M2 4.500 L2 27.5 M30 4.500 L30 27.5 M7.500 5.5 L7.500 26.5 M24.5 5.5 L24.5 26.5 M7.500 5.5 L24.5 5.5 M7.500 16 L24.5 16 M7.500 26.5 L24.5 26.5" fill="none" stroke="#4d4d4d" stroke-width="2.2"/><g fill="#4d4d4d"><rect x="2" y="7" width="5" height="2"/><rect x="2" y="12" width="5" height="2"/><rect x="2" y="17" width="5" height="2"/><rect x="2" y="22" width="5" height="2"/><rect x="25" y="7" width="5" height="2"/><rect x="25" y="12" width="5" height="2"/><rect x="25" y="17" width="5" height="2"/><rect x="25" y="22" width="5" height="2"/></g></svg>
<div class="abs" style="left:243.0px;top:1894.5px;font-size:29.33px;line-height:1;white-space:nowrap;letter-spacing:0.47px;color:#111;">Videos</div>
<svg class="abs" style="left:193.5px;top:1970.5px" width="32" height="32" viewBox="0 0 32 32"><path d="M5.500 9 L5.500 27 Q5.500 30 8.500 30 L23.500 30 Q26.500 30 26.500 27 L26.500 9" fill="none" stroke="#4d4d4d" stroke-width="2.2"/><path d="M3 8.500 Q3 5.500 6 5.500 L26 5.500 Q29 5.500 29 8.500 L29 10 L3 10Z" fill="#4d4d4d"/><path d="M12 5 L12 2 L20 2 L20 5" fill="none" stroke="#4d4d4d" stroke-width="2.2"/><g fill="#4d4d4d"><rect x="10" y="13.5" width="2.2" height="11.500"/><rect x="14.900" y="13.5" width="2.2" height="11.500"/><rect x="19.800" y="13.5" width="2.2" height="11.500"/></g></svg>
<div class="abs" style="left:243.0px;top:1970.5px;font-size:29.33px;line-height:1;white-space:nowrap;letter-spacing:-0.29px;color:#111;">Rubbish Bin</div>
<svg class="abs" style="left:194.5px;top:2065px" width="32" height="32" viewBox="0 0 32 32"><path d="M16 5.500 L16 26.5 M5.500 16 L26.5 16" stroke="#4d4d4d" stroke-width="2"/></svg>
<div class="abs" style="left:243.0px;top:2065.0px;font-size:29.33px;line-height:1;white-space:nowrap;letter-spacing:0.34px;color:#111;">Other Locations</div>
<svg width="0" height="0" style="position:absolute"><defs><linearGradient id="fb" x1="0" y1="0" x2="1" y2="0.35"><stop offset="0" stop-color="#862a55"/><stop offset="0.45" stop-color="#a8323f"/><stop offset="0.8" stop-color="#d9502d"/><stop offset="1" stop-color="#ee6a2a"/></linearGradient><linearGradient id="ff" x1="0" y1="0" x2="1" y2="1"><stop offset="0" stop-color="#6e6e6e"/><stop offset="1" stop-color="#7e7e7e"/></linearGradient><linearGradient id="dk" x1="0" y1="0" x2="1" y2="1"><stop offset="0" stop-color="#b545a6"/><stop offset="0.5" stop-color="#d85f72"/><stop offset="1" stop-color="#f47636"/></linearGradient><linearGradient id="dk2" x1="0" y1="0" x2="0" y2="1"><stop offset="0" stop-color="#732b78"/><stop offset="1" stop-color="#933a5a"/></linearGradient></defs></svg>
<svg class="abs" style="left:610.5px;top:1280.0px" width="92" height="84" viewBox="0 0 92 84"><rect x="0" y="0" width="92" height="80" rx="13" fill="url(#dk)"/><path d="M13 0 Q0 0 0 13 L0 67 Q0 80 13 80 L20 80 L20 0Z" fill="url(#dk2)"/><path d="M0 66 L0 67 Q0 80 13 80 L79 80 Q92 80 92 67 L92 66 Q92 78 79 78 L13 78 Q0 78 0 66Z" fill="#000" opacity="0.15"/></svg>
<div class="abs" style="left:601.2px;top:1370.7px;font-size:29.33px;line-height:1;white-space:nowrap;letter-spacing:0.43px;color:#111;">Desktop</div>
<svg class="abs" style="left:820.5px;top:1275.7px" width="92" height="88" viewBox="0 0 92 88"><path d="M0 9 Q0 0 9 0 L33 0 Q37.500 0 40 3 L42.500 6 L83 6 Q92 6 92 15 L92 60 L0 60Z" fill="url(#fb)"/><path d="M0 30 Q0 20.500 9 20.500 L33 20.500 Q37.500 20.500 40 17.500 L42 15.500 Q43.500 14 46 14 L83 14 Q92 14 92 23 L92 75 Q92 84 83 84 L9 84 Q0 84 0 75Z" fill="url(#ff)"/><path d="M0 73 L0 75 Q0 84 9 84 L83 84 Q92 84 92 75 L92 73 Q92 81.500 83 81.500 L9 81.500 Q0 81.500 0 73Z" fill="#5c5c5c"/><path d="M92 52 L92 75 Q92 81.500 83 81.500 L62 81.500Z" fill="#fff" opacity="0.045"/><path d="M33 35 L59 35 L59 58 L52 65 L33 65Z" fill="none" stroke="#e4e4e4" stroke-width="2"/><path d="M59 58 L52 58 L52 65Z" fill="#e4e4e4"/><g fill="#e4e4e4"><rect x="38" y="41" width="16" height="2"/><rect x="38" y="45.500" width="16" height="2"/><rect x="38" y="50" width="16" height="2"/><rect x="38" y="54.500" width="9" height="2"/></g></svg>
<div class="abs" style="left:792.1px;top:1370.7px;font-size:29.33px;line-height:1;white-space:nowrap;letter-spacing:0.04px;color:#111;">Documents</div>
<svg class="abs" style="left:1030.5px;top:1275.7px" width="92" height="88" viewBox="0 0 92 88"><path d="M0 9 Q0 0 9 0 L33 0 Q37.500 0 40 3 L42.500 6 L83 6 Q92 6 92 15 L92 60 L0 60Z" fill="url(#fb)"/><path d="M0 30 Q0 20.500 9 20.500 L33 20.500 Q37.500 20.500 40 17.500 L42 15.500 Q43.500 14 46 14 L83 14 Q92 14 92 23 L92 75 Q92 84 83 84 L9 84 Q0 84 0 75Z" fill="url(#ff)"/><path d="M0 73 L0 75 Q0 84 9 84 L83 84 Q92 84 92 75 L92 73 Q92 81.500 83 81.500 L9 81.500 Q0 81.500 0 73Z" fill="#5c5c5c"/><path d="M92 52 L92 75 Q92 81.500 83 81.500 L62 81.500Z" fill="#fff" opacity="0.045"/><path d="M41.500 33.500 L50.500 33.500 L50.500 46.500 L56.500 46.500 L46 60.500 L35.500 46.500 L41.500 46.500Z" fill="none" stroke="#e4e4e4" stroke-width="2"/><rect x="34.500" y="65.500" width="23" height="2" fill="#e4e4e4"/></svg>
<div class="abs" style="left:1003.9px;top:1370.7px;font-size:29.33px;line-height:1;white-space:nowrap;letter-spacing:0.02px;color:#111;">Downloads</div>
<svg class="abs" style="left:1240.5px;top:1275.7px" width="92" height="88" viewBox="0 0 92 88"><path d="M0 9 Q0 0 9 0 L33 0 Q37.500 0 40 3 L42.500 6 L83 6 Q92 6 92 15 L92 60 L0 60Z" fill="url(#fb)"/><path d="M0 30 Q0 20.500 9 20.500 L33 20.500 Q37.500 20.500 40 17.500 L42 15.500 Q43.500 14 46 14 L83 14 Q92 14 92 23 L92 75 Q92 84 83 84 L9 84 Q0 84 0 75Z" fill="url(#ff)"/><path d="M0 73 L0 75 Q0 84 9 84 L83 84 Q92 84 92 75 L92 73 Q92 81.500 83 81.500 L9 81.500 Q0 81.500 0 73Z" fill="#5c5c5c"/><path d="M92 52 L92 75 Q92 81.500 83 81.500 L62 81.500Z" fill="#fff" opacity="0.045"/><path d="M40 59 L40 40 L57 36 L57 56" fill="none" stroke="#e4e4e4" stroke-width="2"/><path d="M40 45 L57 41 L57 36 L40 40Z" fill="#e4e4e4"/><ellipse cx="36.500" cy="59.500" rx="4.500" ry="4" fill="#e4e4e4"/><ellipse cx="53.500" cy="56.500" rx="4.500" ry="4" fill="#e4e4e4"/></svg>
<div class="abs" style="left:1248.0px;top:1370.7px;font-size:29.33px;line-height:1;white-space:nowrap;letter-spacing:0.08px;color:#111;">Music</div>
<svg class="abs" style="left:1451.5px;top:1275.7px" width="92" height="88" viewBox="0 0 92 88"><path d="M0 9 Q0 0 9 0 L33 0 Q37.500 0 40 3 L42.500 6 L83 6 Q92 6 92 15 L92 60 L0 60Z" fill="url(#fb)"/><path d="M0 30 Q0 20.500 9 20.500 L33 20.500 Q37.500 20.500 40 17.500 L42 15.500 Q43.500 14 46 14 L83 14 Q92 14 92 23 L92 75 Q92 84 83 84 L9 84 Q0 84 0 75Z" fill="url(#ff)"/><path d="M0 73 L0 75 Q0 84 9 84 L83 84 Q92 84 92 75 L92 73 Q92 81.500 83 81.500 L9 81.500 Q0 81.500 0 73Z" fill="#5c5c5c"/><path d="M92 52 L92 75 Q92 81.500 83 81.500 L62 81.500Z" fill="#fff" opacity="0.045"/><rect x="32.500" y="37" width="27" height="26" fill="none" stroke="#e4e4e4" stroke-width="2"/><rect x="32.500" y="59" width="27" height="4" fill="#e4e4e4"/><path d="M36 57 L42.500 47.500 L46.500 53 L49.500 49.500 L55 57Z" fill="#e4e4e4"/><circle cx="53.500" cy="43.500" r="2.600" fill="#e4e4e4"/></svg>
<div class="abs" style="left:1444.0px;top:1370.7px;font-size:29.33px;line-height:1;white-space:nowrap;letter-spacing:0.13px;color:#111;">Pictures</div>
<svg class="abs" style="left:610.5px;top:1423.7px" width="92" height="88" viewBox="0 0 92 88"><path d="M0 9 Q0 0 9 0 L33 0 Q37.500 0 40 3 L42.500 6 L83 6 Q92 6 92 15 L92 60 L0 60Z" fill="url(#fb)"/><path d="M0 30 Q0 20.500 9 20.500 L33 20.500 Q37.500 20.500 40 17.500 L42 15.500 Q43.500 14 46 14 L83 14 Q92 14 92 23 L92 75 Q92 84 83 84 L9 84 Q0 84 0 75Z" fill="url(#ff)"/><path d="M0 73 L0 75 Q0 84 9 84 L83 84 Q92 84 92 75 L92 73 Q92 81.500 83 81.500 L9 81.500 Q0 81.500 0 73Z" fill="#5c5c5c"/><path d="M92 52 L92 75 Q92 81.500 83 81.500 L62 81.500Z" fill="#fff" opacity="0.045"/><g transform="translate(-2.6 -1.5)"><circle cx="36" cy="50" r="4.300" fill="none" stroke="#e4e4e4" stroke-width="2"/><circle cx="54.500" cy="40" r="4.300" fill="none" stroke="#e4e4e4" stroke-width="2"/><circle cx="54.500" cy="60" r="4.300" fill="none" stroke="#e4e4e4" stroke-width="2"/><path d="M40 48 L50.500 42 M40 52 L50.500 58" fill="none" stroke="#e4e4e4" stroke-width="2"/></g></svg>
<div class="abs" style="left:616.0px;top:1518.7px;font-size:29.33px;line-height:1;white-space:nowrap;letter-spacing:0.17px;color:#111;">Public</div>
<svg class="abs" style="left:820.5px;top:1423.7px" width="92" height="88" viewBox="0 0 92 88"><path d="M0 9 Q0 0 9 0 L33 0 Q37.500 0 40 3 L42.500 6 L83 6 Q92 6 92 15 L92 60 L0 60Z" fill="url(#fb)"/><path d="M0 30 Q0 20.500 9 20.500 L33 20.500 Q37.500 20.500 40 17.500 L42 15.500 Q43.500 14 46 14 L83 14 Q92 14 92 23 L92 75 Q92 84 83 84 L9 84 Q0 84 0 75Z" fill="url(#ff)"/><path d="M0 73 L0 75 Q0 84 9 84 L83 84 Q92 84 92 75 L92 73 Q92 81.500 83 81.500 L9 81.500 Q0 81.500 0 73Z" fill="#5c5c5c"/><path d="M92 52 L92 75 Q92 81.500 83 81.500 L62 81.500Z" fill="#fff" opacity="0.045"/></svg>
<div class="abs" style="left:835.8px;top:1518.7px;font-size:29.33px;line-height:1;white-space:nowrap;letter-spacing:-0.55px;color:#111;">snap</div>
<svg class="abs" style="left:1030.5px;top:1423.7px" width="92" height="88" viewBox="0 0 92 88"><path d="M0 9 Q0 0 9 0 L33 0 Q37.500 0 40 3 L42.500 6 L83 6 Q92 6 92 15 L92 60 L0 60Z" fill="url(#fb)"/><path d="M0 30 Q0 20.500 9 20.500 L33 20.500 Q37.500 20.500 40 17.500 L42 15.500 Q43.500 14 46 14 L83 14 Q92 14 92 23 L92 75 Q92 84 83 84 L9 84 Q0 84 0 75Z" fill="url(#ff)"/><path d="M0 73 L0 75 Q0 84 9 84 L83 84 Q92 84 92 75 L92 73 Q92 81.500 83 81.500 L9 81.500 Q0 81.500 0 73Z" fill="#5c5c5c"/><path d="M92 52 L92 75 Q92 81.500 83 81.500 L62 81.500Z" fill="#fff" opacity="0.045"/></svg>
<div class="abs" style="left:1034.4px;top:1518.7px;font-size:29.33px;line-height:1;white-space:nowrap;letter-spacing:-0.11px;color:#111;">Steam</div>
<svg class="abs" style="left:1240.5px;top:1423.7px" width="92" height="88" viewBox="0 0 92 88"><path d="M0 9 Q0 0 9 0 L33 0 Q37.500 0 40 3 L42.500 6 L83 6 Q92 6 92 15 L92 60 L0 60Z" fill="url(#fb)"/><path d="M0 30 Q0 20.500 9 20.500 L33 20.500 Q37.500 20.500 40 17.500 L42 15.500 Q43.500 14 46 14 L83 14 Q92 14 92 23 L92 75 Q92 84 83 84 L9 84 Q0 84 0 75Z" fill="url(#ff)"/><path d="M0 73 L0 75 Q0 84 9 84 L83 84 Q92 84 92 75 L92 73 Q92 81.500 83 81.500 L9 81.500 Q0 81.500 0 73Z" fill="#5c5c5c"/><path d="M92 52 L92 75 Q92 81.500 83 81.500 L62 81.500Z" fill="#fff" opacity="0.045"/><rect x="36.500" y="35" width="8" height="29" fill="none" stroke="#e4e4e4" stroke-width="2"/><path d="M50 35 L58 35 L58 56 L54 65 L50 56Z" fill="#e4e4e4"/><g fill="#e4e4e4"><rect x="41" y="39" width="3.500" height="1.600"/><rect x="41" y="43.500" width="3.500" height="1.600"/><rect x="41" y="48" width="3.500" height="1.600"/><rect x="41" y="52.500" width="3.500" height="1.600"/><rect x="41" y="57" width="3.500" height="1.600"/></g><rect x="50" y="41" width="8" height="2" fill="#777"/></svg>
<div class="abs" style="left:1217.5px;top:1518.7px;font-size:29.33px;line-height:1;white-space:nowrap;letter-spacing:0.47px;color:#111;">Templates</div>
<svg class="abs" style="left:1451.5px;top:1423.7px" width="92" height="88" viewBox="0 0 92 88"><path d="M0 9 Q0 0 9 0 L33 0 Q37.500 0 40 3 L42.500 6 L83 6 Q92 6 92 15 L92 60 L0 60Z" fill="url(#fb)"/><path d="M0 30 Q0 20.500 9 20.500 L33 20.500 Q37.500 20.500 40 17.500 L42 15.500 Q43.500 14 46 14 L83 14 Q92 14 92 23 L92 75 Q92 84 83 84 L9 84 Q0 84 0 75Z" fill="url(#ff)"/><path d="M0 73 L0 75 Q0 84 9 84 L83 84 Q92 84 92 75 L92 73 Q92 81.500 83 81.500 L9 81.500 Q0 81.500 0 73Z" fill="#5c5c5c"/><path d="M92 52 L92 75 Q92 81.500 83 81.500 L62 81.500Z" fill="#fff" opacity="0.045"/><path d="M31 36.500 L31 63.500 M61 36.500 L61 63.500 M36.500 37.500 L36.500 62.500 M55.500 37.500 L55.500 62.500 M36.500 37.500 L55.500 37.500 M36.500 50 L55.500 50 M36.500 62.500 L55.500 62.500" fill="none" stroke="#e4e4e4" stroke-width="2"/><g fill="#e4e4e4"><rect x="31" y="40" width="5" height="2"/><rect x="31" y="46" width="5" height="2"/><rect x="31" y="52" width="5" height="2"/><rect x="31" y="58" width="5" height="2"/><rect x="56" y="40" width="5" height="2"/><rect x="56" y="46" width="5" height="2"/><rect x="56" y="52" width="5" height="2"/><rect x="56" y="58" width="5" height="2"/></g></svg>
<div class="abs" style="left:1451.8px;top:1518.7px;font-size:29.33px;line-height:1;white-space:nowrap;letter-spacing:0.36px;color:#111;">Videos</div>
<svg class="abs" style="left:3682px;top:11px" width="36.500" height="32" viewBox="0 0 34 30"><path d="M2 10.500 L7.500 10.500 L15 3 L15 27 L7.500 19.500 L2 19.500Z" fill="#fff"/><path d="M19 9.500 Q23 15 19 20.500" fill="none" stroke="#fff" stroke-width="2.200"/><path d="M23.500 5.500 Q30.500 15 23.500 24.500" fill="none" stroke="#fff" stroke-width="2.200" opacity="0.450"/></svg>
<svg class="abs" style="left:3736px;top:10px" width="36" height="32" viewBox="0 0 36 32"><path d="M8.500 8 L3 18.500 L6.500 18.500 L4.500 28 L11 15.500 L7.500 15.500Z" fill="#fff" opacity="0.600"/><rect x="19.500" y="1" width="7.500" height="3" fill="#fff"/><rect x="15.300" y="4.200" width="15.700" height="25.700" rx="2.500" fill="none" stroke="#fff" stroke-width="2.600"/><rect x="18.500" y="7.500" width="9.400" height="19.200" fill="#fff"/></svg>
<svg class="abs" style="left:3790px;top:23px" width="20" height="11" viewBox="0 0 20 11"><path d="M0 0 L20 0 L10 10.500Z" fill="#fff"/></svg>
<svg class="abs" style="left:3716px;top:60px" width="54" height="28" viewBox="0 0 54 28"><path d="M2 28 L27 2.500 L52 28Z" fill="#fafafa"/><path d="M2 27 L27 2.500 L52 27" fill="none" stroke="rgba(0,0,0,0.25)" stroke-width="1"/></svg>
<div class="abs" style="left:3200px;top:86px;width:614px;height:804px;border-radius:11px;background:#fafafa;box-shadow:0 0 0 1px rgba(0,0,0,0.18),0 3px 8px rgba(0,0,0,0.22)"></div>
<svg class="abs" style="left:3718px;top:80px" width="50" height="10" viewBox="0 0 50 10"><path d="M0 10 L9 0 L41 0 L50 10Z" fill="#fafafa"/></svg>
<div class="abs" style="left:3309px;top:143.9px;width:451px;height:7px;border-radius:3.500px;background:#e1e1e1;box-shadow:inset 0 0 0 1px #d0d0d0"></div><div class="abs" style="left:3309px;top:143.9px;width:208.69999999999982px;height:7px;border-radius:3.500px;background:#924d8b"></div><div class="abs" style="left:3502.2px;top:131.9px;width:28px;height:28px;border-radius:16px;background:#fdfdfd;border:1.500px solid #b4b4b4;box-shadow:0 1px 2px rgba(0,0,0,0.15)"></div>
<div class="abs" style="left:3309px;top:200.6px;width:451px;height:7px;border-radius:3.500px;background:#e1e1e1;box-shadow:inset 0 0 0 1px #d0d0d0"></div><div class="abs" style="left:3309px;top:200.6px;width:125.5px;height:7px;border-radius:3.500px;background:#924d8b"></div><div class="abs" style="left:3419.0px;top:188.6px;width:28px;height:28px;border-radius:16px;background:#fdfdfd;border:1.500px solid #b4b4b4;box-shadow:0 1px 2px rgba(0,0,0,0.15)"></div>
<svg class="abs" style="left:3257px;top:131px" width="34" height="32" viewBox="0 0 34 32"><path d="M2 11 L7.500 11 L15 3.500 L15 28.500 L7.500 21 L2 21Z" fill="#3d3d3d"/><path d="M19 10.500 Q23 16 19 21.500" fill="none" stroke="#3d3d3d" stroke-width="2.200"/><path d="M23.500 6.500 Q30.500 16 23.500 25.500" fill="none" stroke="#3d3d3d" stroke-width="2.200"/></svg>
<svg class="abs" style="left:3256px;top:188px" width="34" height="34" viewBox="0 0 34 34"><circle cx="17" cy="17" r="8.500" fill="none" stroke="#3d3d3d" stroke-width="2.200"/><path d="M17 8.500 A8.500 8.500 0 0 1 17 25.500Z" fill="#3d3d3d"/><g stroke="#3d3d3d" stroke-width="2.200"><path d="M17 1 L17 5 M17 29 L17 33 M1 17 L5 17 M29 17 L33 17 M5.700 5.700 L8.500 8.500 M25.500 25.500 L28.300 28.300 M5.700 28.300 L8.500 25.500 M25.500 8.500 L28.300 5.700"/></g></svg>
<div class="abs" style="left:3377px;top:247.6px;width:256px;height:2px;background:#cdcdcd"></div>
<div class="abs" style="left:3377px;top:454.4px;width:256px;height:2px;background:#cdcdcd"></div>
<div class="abs" style="left:3309.0px;top:280.1px;font-size:29.33px;line-height:1;white-space:nowrap;letter-spacing:0.41px;color:#3d3d3d;">Wi-Fi Off</div>
<svg class="abs" style="left:3741px;top:285px" width="11" height="20" viewBox="0 0 11 20"><path d="M0 0 L10 10 L0 20Z" fill="#3d3d3d"/></svg>
<div class="abs" style="left:3309.0px;top:338.1px;font-size:29.33px;line-height:1;white-space:nowrap;letter-spacing:-0.56px;color:#3d3d3d;">On</div>
<svg class="abs" style="left:3741px;top:343px" width="11" height="20" viewBox="0 0 11 20"><path d="M0 0 L10 10 L0 20Z" fill="#3d3d3d"/></svg>
<div class="abs" style="left:3309.0px;top:396.1px;font-size:29.33px;line-height:1;white-space:nowrap;letter-spacing:-0.20px;color:#3d3d3d;">Fully Charged</div>
<svg class="abs" style="left:3741px;top:401px" width="11" height="20" viewBox="0 0 11 20"><path d="M0 0 L10 10 L0 20Z" fill="#3d3d3d"/></svg>
<div class="abs" style="left:3309.0px;top:487.6px;font-size:29.33px;line-height:1;white-space:nowrap;letter-spacing:0.38px;color:#3d3d3d;">Settings</div>
<div class="abs" style="left:3309.0px;top:545.6px;font-size:29.33px;line-height:1;white-space:nowrap;letter-spacing:-0.49px;color:#3d3d3d;">Lock</div>
<div class="abs" style="left:3309.0px;top:603.6px;font-size:29.33px;line-height:1;white-space:nowrap;letter-spacing:0.55px;color:#3d3d3d;">Power Off / Log Out</div>
<svg class="abs" style="left:3738px;top:617px" width="20" height="11" viewBox="0 0 20 11"><path d="M0 0 L20 0 L10 10.500Z" fill="#3d3d3d"/></svg>
<svg class="abs" style="left:3256px;top:281px" width="34" height="28" viewBox="0 0 34 28"><path d="M2.500 8.500 Q17 -2.500 31.500 8.500 L17 25.500Z" fill="none" stroke="#3d3d3d" stroke-width="2.200" stroke-linejoin="round"/></svg>
<svg class="abs" style="left:3262.500px;top:337px" width="22.500" height="32.500" viewBox="0 0 24 33" preserveAspectRatio="none"><rect x="0.500" y="0.500" width="23" height="32" rx="3" fill="#3d3d3d"/><path d="M6 10.500 L17.500 21.500 L12 26.500 L12 6 L17.500 11 L6 22" fill="none" stroke="#fafafa" stroke-width="2"/></svg>
<svg class="abs" style="left:3256px;top:394px" width="34" height="34" viewBox="0 0 34 34"><path d="M7.500 7.500 L1.500 18.500 L5.500 18.500 L3.500 28 L10 15.500 L6.500 15.500Z" fill="#3d3d3d" opacity="0.550"/><rect x="17.500" y="1.500" width="8" height="3" fill="#3d3d3d"/><rect x="13.500" y="4.500" width="16" height="26" rx="2.500" fill="none" stroke="#3d3d3d" stroke-width="2.400"/><rect x="17.200" y="8.200" width="8.600" height="18.600" fill="#3d3d3d"/></svg>
<svg class="abs" style="left:3256px;top:486px" width="34" height="34" viewBox="0 0 34 34"><circle cx="17" cy="17" r="13.500" fill="none" stroke="#3d3d3d" stroke-width="2.600"/><circle cx="17" cy="17" r="9" fill="none" stroke="#3d3d3d" stroke-width="2"/><g fill="#3d3d3d"><rect x="14.500" y="0" width="5" height="4.500" transform="rotate(0 17 17)"/><rect x="14.500" y="0" width="5" height="4.500" transform="rotate(45 17 17)"/><rect x="14.500" y="0" width="5" height="4.500" transform="rotate(90 17 17)"/><rect x="14.500" y="0" width="5" height="4.500" transform="rotate(135 17 17)"/><rect x="14.500" y="0" width="5" height="4.500" transform="rotate(180 17 17)"/><rect x="14.500" y="0" width="5" height="4.500" transform="rotate(225 17 17)"/><rect x="14.500" y="0" width="5" height="4.500" transform="rotate(270 17 17)"/><rect x="14.500" y="0" width="5" height="4.500" transform="rotate(315 17 17)"/></g></svg>
<svg class="abs" style="left:3261px;top:545px" width="24" height="30" viewBox="0 0 24 30"><path d="M5.500 14 L5.500 9 Q5.500 2.500 12 2.500 Q18.500 2.500 18.500 9 L18.500 14" fill="none" stroke="#3d3d3d" stroke-width="2.600"/><rect x="2" y="13" width="20" height="15.500" rx="1" fill="#3d3d3d"/></svg>
<svg class="abs" style="left:3257px;top:603px" width="30" height="30" viewBox="0 0 30 30"><path d="M9.500 5.500 A12 12 0 1 0 20.500 5.500" fill="none" stroke="#3d3d3d" stroke-width="2.200"/><path d="M15 1 L15 14" stroke="#3d3d3d" stroke-width="2.200"/></svg>
<div class="abs" style="left:3200px;top:647px;width:614px;height:210px;background:#f1f1f1;border-top:2px solid #cfcfcf;border-bottom:2px solid #cfcfcf;box-sizing:border-box"></div>
<div class="abs" style="left:3200px;top:740px;width:614px;height:57px;background:#dedede"></div>
<div class="abs" style="left:3373px;top:721.5px;width:260px;height:2px;background:#cdcdcd"></div>
<div class="abs" style="left:3309.0px;top:663.7px;font-size:29.33px;line-height:1;white-space:nowrap;letter-spacing:0.38px;color:#3d3d3d;">Log Out</div>
<div class="abs" style="left:3309.0px;top:755.2px;font-size:29.33px;line-height:1;white-space:nowrap;letter-spacing:-0.54px;color:#3d3d3d;">Suspend</div>
<div class="abs" style="left:3309.0px;top:812.8px;font-size:29.33px;line-height:1;white-space:nowrap;letter-spacing:0.28px;color:#3d3d3d;">Power Off…</div>
</body>
</html>
